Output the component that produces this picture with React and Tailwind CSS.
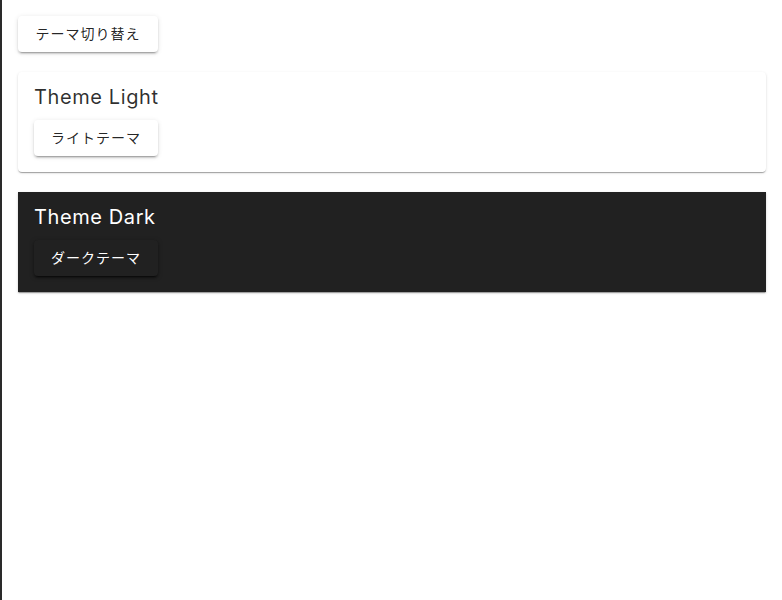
import React, { useState } from "react";

const jp = { fontFamily: '"Inter", "Noto Sans CJK JP", sans-serif' };

const Button = ({ dark, children, onClick }) => (
  <button
    onClick={onClick}
    className={
      "h-9 w-[124px] rounded text-sm tracking-[1px] " +
      (dark
        ? "bg-[#212121] text-white shadow-[0_3px_1px_-2px_rgba(0,0,0,0.4),0_2px_2px_0_rgba(0,0,0,0.3),0_1px_5px_0_rgba(0,0,0,0.25)]"
        : "bg-white text-[rgba(0,0,0,0.87)] shadow-[0_3px_1px_-2px_rgba(0,0,0,0.2),0_2px_2px_0_rgba(0,0,0,0.14),0_1px_5px_0_rgba(0,0,0,0.12)]")
    }
  >
    {children}
  </button>
);

const App = () => {
  const [flip, setFlip] = useState(false);

  return (
    <div
      className="min-h-[600px] border-l-2 border-[#2a2a2a] bg-white p-4"
      style={jp}
    >
      {/* toggle */}
      <button
        onClick={() => setFlip(!flip)}
        className="h-9 w-[140px] rounded bg-white text-sm tracking-[1px] text-[rgba(0,0,0,0.87)] shadow-[0_3px_1px_-2px_rgba(0,0,0,0.2),0_2px_2px_0_rgba(0,0,0,0.14),0_1px_5px_0_rgba(0,0,0,0.12)]"
      >
        テーマ切り替え
      </button>

      {/* light */}
      <div className="mt-5 rounded bg-white p-4 shadow-[0_2px_1px_-1px_rgba(0,0,0,0.2),0_1px_1px_0_rgba(0,0,0,0.14),0_1px_3px_0_rgba(0,0,0,0.12)]">
        <h6 className="h-8 text-xl leading-[18px] tracking-[0.6px] text-[rgba(0,0,0,0.82)]">Theme Light</h6>
        <Button>ライトテーマ</Button>
      </div>

      {/* dark */}
      <div className="mt-5 bg-[#212121] p-4 shadow-[0_2px_1px_-1px_rgba(0,0,0,0.2),0_1px_1px_0_rgba(0,0,0,0.14),0_1px_3px_0_rgba(0,0,0,0.12)]">
        <h6 className="h-8 text-xl leading-[18px] tracking-[0.6px] text-white">Theme Dark</h6>
        <Button dark>ダークテーマ</Button>
      </div>
    </div>
  );
};

export default App;
